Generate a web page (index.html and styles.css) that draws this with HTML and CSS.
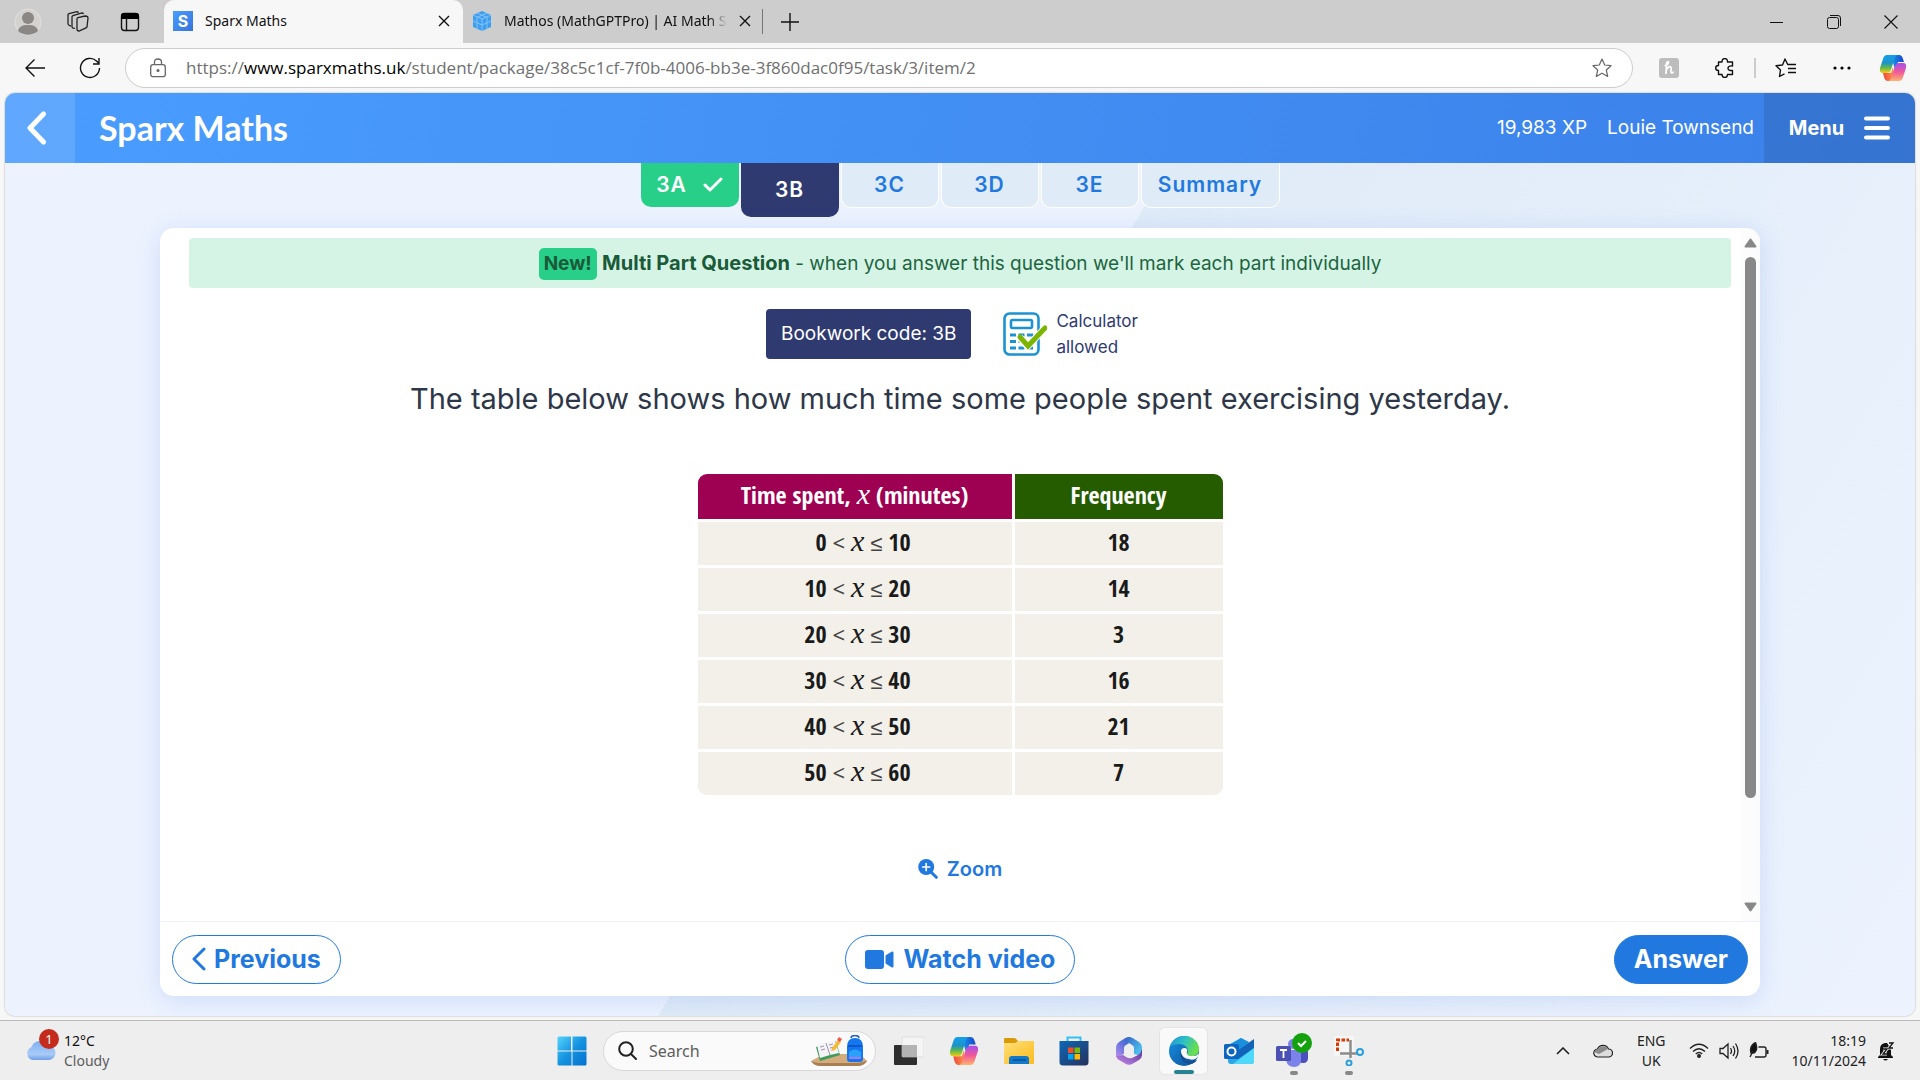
FILE: index.html
```html
<!DOCTYPE html>
<html lang="en-GB">
<head>
<meta charset="utf-8">
<title>Sparx Maths</title>
<link rel="stylesheet" href="styles.css">
</head>
<body>
<svg class="defs" aria-hidden="true">
  <defs>
    <linearGradient id="cpA" x1="0" y1="0" x2="0" y2="1"><stop offset="0" stop-color="#12a0ee"/><stop offset=".45" stop-color="#1f93c8"/><stop offset=".7" stop-color="#5fb84e"/><stop offset="1" stop-color="#f5cf10"/></linearGradient>
    <linearGradient id="cpB" x1="0" y1="0" x2="0" y2="1"><stop offset="0" stop-color="#a44df0"/><stop offset=".5" stop-color="#f0589a"/><stop offset="1" stop-color="#ffb36b"/></linearGradient>
    <linearGradient id="cpC" x1="0" y1="0" x2="1" y2="0"><stop offset="0" stop-color="#1697f0"/><stop offset="1" stop-color="#1746c8"/></linearGradient>
    <linearGradient id="cpD" x1="0" y1="0" x2="1" y2="0"><stop offset="0" stop-color="#f0493c"/><stop offset="1" stop-color="#ff9a4c"/></linearGradient>
    <linearGradient id="win" x1="0" y1="0" x2="1" y2="1"><stop offset="0" stop-color="#55d3fb"/><stop offset=".5" stop-color="#1492df"/><stop offset="1" stop-color="#0470cf"/></linearGradient>
    <linearGradient id="folder" x1="0" y1="0" x2="1" y2="1"><stop offset="0" stop-color="#ffdf78"/><stop offset="1" stop-color="#fdbb1c"/></linearGradient>
    <linearGradient id="store" x1="0" y1="0" x2="1" y2="1"><stop offset="0" stop-color="#0c68b8"/><stop offset="1" stop-color="#27305c"/></linearGradient>
    <linearGradient id="edgeT" x1="0" y1="0" x2="1" y2=".4"><stop offset="0" stop-color="#2090d8"/><stop offset=".5" stop-color="#2cc0c6"/><stop offset="1" stop-color="#68df4c"/></linearGradient>
    <linearGradient id="edgeB" x1="0" y1="0" x2="1" y2="1"><stop offset="0" stop-color="#1593e2"/><stop offset="1" stop-color="#0e4d98"/></linearGradient>
    <linearGradient id="m1" x1="0" y1="1" x2="1" y2="0"><stop offset="0" stop-color="#b98df0"/><stop offset=".6" stop-color="#4f6fd8"/><stop offset="1" stop-color="#2c56b4"/></linearGradient>
    <linearGradient id="m2" x1="0" y1="0" x2="1" y2="1"><stop offset="0" stop-color="#3567c4"/><stop offset="1" stop-color="#53d6f8"/></linearGradient>
    <linearGradient id="m3" x1="0" y1="1" x2="1" y2="0"><stop offset="0" stop-color="#c58cf0"/><stop offset="1" stop-color="#5e3390"/></linearGradient>
    <linearGradient id="cloud" x1="0" y1="0" x2="0" y2="1"><stop offset="0" stop-color="#7eb0f2"/><stop offset=".7" stop-color="#a9cbf7"/><stop offset="1" stop-color="#6e9fea"/></linearGradient>
    <symbol id="copilot" viewBox="0 0 28 28">
      <path fill="url(#cpC)" d="M12 1h8q3 0 4 4l1 3h-6l-3 8z"/>
      <path fill="url(#cpD)" d="M16 27H9q-3 0-4-4l-1-4h8l2-6z"/>
      <path fill="url(#cpA)" d="M8 1h10q-2 1-3 5l-3 10q-1 3-4 3H4q-4 0-3-5l3-9q1-4 4-4z"/>
      <path fill="url(#cpB)" d="M20 27H10q2-1 3-5l3-10q1-3 4-3h4q4 0 3 5l-3 9q-1 4-4 4z"/>
    </symbol>
    <symbol id="close" viewBox="0 0 12 12"><path d="M1 1l10 10M11 1L1 11" stroke="currentColor" stroke-width="1.4" fill="none"/></symbol>
  </defs>
</svg>

<div class="tabstrip">
  <button class="strip-btn" aria-label="Profile"><svg width="28" height="28" viewBox="0 0 28 28"><circle cx="14" cy="14" r="13" fill="#d3d2d0" stroke="#e2e1df"/><circle cx="14" cy="10" r="6" fill="#8b8784"/><path d="M4 23c1-5 5-6 10-6s9 1 10 6c-6 5-14 5-20 0z" fill="#8b8784"/></svg></button>
  <button class="strip-btn" aria-label="Workspaces"><svg width="22" height="22" viewBox="0 0 22 22" fill="none" stroke="#222" stroke-width="1.3"><path d="M10 8q0-1 1-1.300l7-1.700q3 0 3 2l-1 9q-1 1-2 1.400l-6 2.600q-2 0-2-2z"/><path d="M8 17q-2 1-3-1V6q0-1 1-1.400l9-2.600q1 0 1.500 1"/><path d="M4 15q-2 0-3-2V4q0-1 1-1.500L10 0.700q1 0 1.500 1"/></svg></button>
  <button class="strip-btn" aria-label="Tab actions"><svg width="20" height="20" viewBox="0 0 20 20"><rect x="1.500" y="1.500" width="17" height="17" rx="3" fill="none" stroke="#111" stroke-width="1.400"/><path d="M1 7V4q0-3 3-3h12q3 0 3 3v3z"/><path d="M6.500 6v12" stroke="#111" stroke-width="1.400"/></svg></button>
  <div class="tab tab-active">
    <span class="favicon">S</span>
    <span class="tab-title">Sparx Maths</span>
    <button class="tab-close" aria-label="Close tab"><svg width="12" height="12"><use href="#close"/></svg></button>
  </div>
  <div class="tab">
    <svg width="20" height="20" viewBox="0 0 20 20"><path d="M10 0l9 4v12l-9 4-9-4V4z" fill="#3d9ff0"/><path d="M1 4l9 4 9-4M10 8v12M5 2l9 4M15 2L6 6M1 10l9 4 9-4M5 6v12M15 6v12" stroke="#8cc4f4" stroke-width=".9" fill="none"/></svg>
    <span class="tab-title tab-fade">Mathos (MathGPTPro) | AI Math S</span>
    <button class="tab-close" aria-label="Close tab"><svg width="12" height="12"><use href="#close"/></svg></button>
  </div>
  <span class="tab-sep"></span>
  <button class="new-tab" aria-label="New tab"><svg width="18" height="18" viewBox="0 0 18 18"><path d="M9 0v18M0 9h18" stroke="#111" stroke-width="1.400"/></svg></button>
  <div class="window-controls">
    <button aria-label="Minimise"><svg width="14" height="14" viewBox="0 0 14 14"><path d="M0 7.500h13" stroke="#111"/></svg></button>
    <button aria-label="Restore"><svg width="14" height="14" viewBox="0 0 14 14" fill="none" stroke="#111"><rect x=".5" y="2.500" width="11" height="11" rx="2"/><path d="M3 .5h8q2.500 0 2.500 2.500v8"/></svg></button>
    <button aria-label="Close"><svg width="14" height="14" viewBox="0 0 14 14"><path d="M.5.500l13 13M13.500.5l-13 13" stroke="#111" stroke-width="1.100"/></svg></button>
  </div>
</div>

<div class="toolbar">
  <button class="nav-btn" aria-label="Back"><svg width="20" height="18" viewBox="0 0 20 18" fill="none" stroke="#111" stroke-width="1.400"><path d="M20 9H1M9.500.5L1 9l8.500 8.500"/></svg></button>
  <button class="nav-btn" aria-label="Refresh"><svg width="22" height="22" viewBox="0 0 22 22" fill="none" stroke="#111" stroke-width="1.400"><path d="M20.500 11a9.500 9.500 0 1 1-3-7L20 6.500M20 1v6h-6"/></svg></button>
  <div class="omnibox">
    <svg width="16" height="20" viewBox="0 0 16 20" fill="none" stroke="#666" stroke-width="1.300"><rect x=".7" y="6.700" width="14.600" height="12" rx="2.500"/><path d="M4.500 6.500V4q0-3 3.500-3t3.500 3v2.500"/><circle cx="8" cy="12.500" r=".9" fill="#555"/></svg>
    <div class="url">https://<b>www.sparxmaths.uk</b>/student/package/38c5c1cf-7f0b-4006-bb3e-3f860dac0f95/task/3/item/2</div>
    <svg width="20" height="20" viewBox="0 0 20 20" fill="none" stroke="#666" stroke-width="1.200" stroke-linejoin="round"><path d="M10 1l2.700 6 6.300.7-4.700 4.300 1.400 6.500L10 15.200 4.300 18.500 5.700 12 1 7.700 7.300 7z"/></svg>
  </div>
  <div class="tools">
    <svg width="20" height="20" viewBox="0 0 20 20"><rect width="20" height="20" rx="3" fill="#bdbdbd"/><path d="M5.500 7.500q4-.5 4-3.500-1.500-1-2 2L7 16M7.300 12q2-4 4-3.300 1.500.8.700 3.300-.5 3 .8 3t1.700-1.500" stroke="#fff" stroke-width="1.700" fill="none"/></svg>
    <svg width="20" height="20" viewBox="0 0 20 20" fill="none" stroke="#111" stroke-width="1.400" stroke-linejoin="round"><path d="M3.500 4H7q0-3.500 2.800-3.500T12.500 4h5v4q-4.500-.5-4.500 2.200t4.500 2.300v4h-5q0 3-2.700 3T7 16.500H3.500v-4Q.700 12.500.7 10t2.800-2.500z"/></svg>
    <span class="tool-sep"></span>
    <svg width="22" height="20" viewBox="0 0 22 20" fill="none" stroke="#111" stroke-width="1.400" stroke-linejoin="round"><path d="M13 7l-3-6-2.500 6L1 7.700 5.500 12l-1 6.500 5-2.700M13 6.500h8M13 10.500h8M13 14.500h8"/></svg>
    <svg width="18" height="4" viewBox="0 0 18 4"><circle cx="2" cy="2" r="1.600"/><circle cx="9" cy="2" r="1.600"/><circle cx="16" cy="2" r="1.600"/></svg>
    <svg class="copilot-tool" width="28" height="28"><use href="#copilot"/></svg>
  </div>
</div>

<div class="viewport">
  <header class="site-header">
    <button class="back" aria-label="Back to tasks"><svg width="20" height="34" viewBox="0 0 20 34" fill="none" stroke="#fff" stroke-width="5" stroke-linecap="round" stroke-linejoin="round"><path d="M16.500 3L3 17l13.500 14"/></svg></button>
    <a class="logo" href="#">Sparx Maths</a>
    <span class="xp">19,983 XP</span>
    <span class="user">Louie Townsend</span>
    <button class="menu">Menu <svg width="26" height="24" viewBox="0 0 26 24" stroke="#fff" stroke-width="4" stroke-linecap="round"><path d="M2 2.500h22M2 12h22M2 21.500h22"/></svg></button>
  </header>

  <main class="page">
    <nav class="task-tabs">
      <a class="task-tab done" href="#">3A <svg width="20" height="15" viewBox="0 0 20 15" fill="none" stroke="#fff" stroke-width="3" stroke-linecap="round" stroke-linejoin="round"><path d="M2 8l5 5L18 2"/></svg></a>
      <a class="task-tab current" href="#">3B</a>
      <a class="task-tab" href="#">3C</a>
      <a class="task-tab" href="#">3D</a>
      <a class="task-tab" href="#">3E</a>
      <a class="task-tab summary" href="#">Summary</a>
    </nav>

    <section class="card">
      <div class="card-body">
        <div class="question">
          <p class="banner"><span class="new">New!</span> <b>Multi Part Question</b> - when you answer this question we'll mark each part individually</p>
          <div class="info">
            <span class="bookwork">Bookwork code: 3B</span>
            <div class="calc">
              <svg width="44" height="44" viewBox="0 0 44 44" fill="none"><rect x="1.500" y="1.500" width="34" height="41" rx="5" stroke="#1b93d3" stroke-width="2.600"/><rect x="8" y="8" width="21" height="8" rx="1.500" stroke="#1b93d3" stroke-width="2.600"/><path d="M7 23h6M15.500 23h6M24 23h6M7 29.500h6M15.500 29.500h4M7 36h6M15.500 36h6M24 36h6" stroke="#1b93d3" stroke-width="2.800"/><path d="M16.500 25l8 9.500L42 16" stroke="#fff" stroke-width="7"/><path d="M17 25l8 9L42 16" stroke="#7cb500" stroke-width="5" stroke-linecap="round"/></svg>
              <span>Calculator<br>allowed</span>
            </div>
          </div>
          <p class="prompt">The table below shows how much time some people spent exercising yesterday.</p>
          <table class="data">
            <thead><tr><th class="time">Time spent, <i>x</i> (minutes)</th><th class="freq">Frequency</th></tr></thead>
            <tbody>
              <tr><td><span class="range">0 <s>&lt;</s> <i>x</i> <s>≤</s> 10</span></td><td>18</td></tr>
              <tr><td><span class="range">10 <s>&lt;</s> <i>x</i> <s>≤</s> 20</span></td><td>14</td></tr>
              <tr><td><span class="range">20 <s>&lt;</s> <i>x</i> <s>≤</s> 30</span></td><td>3</td></tr>
              <tr><td><span class="range">30 <s>&lt;</s> <i>x</i> <s>≤</s> 40</span></td><td>16</td></tr>
              <tr><td><span class="range">40 <s>&lt;</s> <i>x</i> <s>≤</s> 50</span></td><td>21</td></tr>
              <tr><td><span class="range">50 <s>&lt;</s> <i>x</i> <s>≤</s> 60</span></td><td>7</td></tr>
            </tbody>
          </table>
          <button class="zoom"><svg width="20" height="20" viewBox="0 0 20 20" fill="none" stroke-linecap="round"><circle cx="8.200" cy="8" r="8" fill="#2179e0"/><path d="M13 13l5.300 5.300" stroke="#2179e0" stroke-width="3"/><path d="M8.200 4.500v7M4.700 8h7" stroke="#fff" stroke-width="1.700"/></svg>Zoom</button>
        </div>
        <div class="scrollbar">
          <svg width="13" height="10" viewBox="0 0 13 10"><path d="M6.500 1.500L11.500 8.500h-10z" fill="#888" stroke="#888" stroke-width="2" stroke-linejoin="round"/></svg>
          <span class="thumb"></span>
          <svg width="13" height="10" viewBox="0 0 13 10"><path d="M6.500 8.500L11.500 1.500h-10z" fill="#888" stroke="#888" stroke-width="2" stroke-linejoin="round"/></svg>
        </div>
      </div>
      <footer class="card-footer">
        <button class="pill"><svg width="14" height="24" viewBox="0 0 14 24" fill="none" stroke="#2179e0" stroke-width="3" stroke-linecap="round" stroke-linejoin="round"><path d="M12 2L2 12l10 10"/></svg>Previous</button>
        <button class="pill watch"><svg width="29" height="19" viewBox="0 0 29 19" fill="#2179e0"><rect width="19" height="19" rx="3"/><path d="M20.500 5.500l6-3.700q2-.8 2 1v13.400q0 1.800-2 1l-6-3.700z"/></svg>Watch video</button>
        <button class="pill answer">Answer</button>
      </footer>
    </section>
  </main>
</div>

<div class="taskbar">
  <div class="weather">
    <svg width="35" height="34" viewBox="0 0 35 34"><path d="M7 31a7 7 0 0 1-.5-13A9 9 0 0 1 23 17a7 7 0 0 1 1 14z" fill="url(#cloud)"/><circle cx="24" cy="10" r="10" fill="#c42b1c"/><text x="24" y="15" class="badge-num">1</text></svg>
    <div><div class="temp">12°C</div><div class="cond">Cloudy</div></div>
  </div>
  <div class="apps">
    <button class="app" aria-label="Start"><svg width="30" height="30" viewBox="0 0 30 30"><path fill="url(#win)" d="M2 .5h12V14.500H.5V2q0-1.500 1.500-1.500zM15.500.5H28q1.500 0 1.500 1.500v12.500h-14zM.5 15.500H14.500v14H2q-1.500 0-1.500-1.500zM15.500 15.500h14V28q0 1.500-1.500 1.500H15.500z"/></svg></button>
    <label class="search">
      <svg width="19" height="19" viewBox="0 0 19 19" fill="none" stroke="#222" stroke-width="2" stroke-linecap="round"><circle cx="8" cy="8" r="6.800"/><path d="M13 13l5 5"/></svg>
      <input type="text" placeholder="Search" aria-label="Search">
      <svg width="58" height="32" viewBox="0 0 58 32"><path d="M1 26l13-7h36l7 7q-3 5-10 5H11q-7 0-10-5z" fill="#d3ab7d"/><path d="M1 26q3 5 10 5h36q7 0 10-5l-1 0q-4 2-10 2H12q-7 0-11-2z" fill="#a87e55"/><path d="M6 12l20-6 4 14-20 6z" fill="#3f9b5c"/><path d="M7 10l9-2 9-3 4 13-9 2-10 3z" fill="#f5f2f8"/><path d="M16 8l4 12M10 12l4-1M11 15l4-1M19 10l4-1M20 13l4-1" stroke="#9c98ac" fill="none"/><path d="M22 13l6-8 3 2-6 8-4 1z" fill="#f8b932"/><path d="M27 5l2-3 3 2-2 3z" fill="#ee5a4a"/><path d="M37 12q0-9 8-9t8 9v12q0 3-3 3H40q-3 0-3-3z" fill="#1477f0"/><path d="M41 3q0-2.500 4-2.500T49 3" stroke="#1c56c8" stroke-width="1.500" fill="none"/><path d="M39 17q6-5 12 0v6H39z" fill="#2aa2fc"/><path d="M39 23h12" stroke="#a879f0" stroke-width="2"/><path d="M38 11h14" stroke="#0b4cbd" stroke-width="1.500"/></svg>
    </label>
    <button class="app" aria-label="Task view"><svg width="30" height="30" viewBox="0 0 30 30"><rect y="9" width="23" height="20" rx="1" fill="#2e2e2e"/><rect x="8" y="1" width="22" height="20" rx="1" fill="#f4f4f4" stroke="#d4d4d4" stroke-width=".6"/><rect x="8" y="9" width="15" height="12" fill="#b3b3b3"/></svg></button>
    <button class="app" aria-label="Copilot"><svg width="30" height="30"><use href="#copilot"/></svg></button>
    <button class="app" aria-label="File Explorer"><svg width="30" height="28" viewBox="0 0 30 28"><path d="M0 2q0-1 1-1h9q2 0 3 2l1 1h15q1 0 1 1v5H0z" fill="#d99a09"/><path d="M0 6h11l3-2h16v22q0 1-1 1H1q-1 0-1-1z" fill="url(#folder)"/><path d="M5 27v-5q0-3 3-3h14q3 0 3 3v5z" fill="#1178ca"/><path d="M9 23h13" stroke="#0a4f93" stroke-width="1.500"/></svg></button>
    <button class="app" aria-label="Microsoft Store"><svg width="30" height="30" viewBox="0 0 30 30"><path d="M8.500 6V1.500h13V6" fill="none" stroke="#35c0f5" stroke-width="2"/><path d="M.5 5h29v21q0 3.500-3.500 3.500H4Q.5 29.500.5 26z" fill="url(#store)"/><path fill="#f25022" d="M9 11.500h5.500V17H9z"/><path fill="#7fba00" d="M15.500 11.500H21V17h-5.500z"/><path fill="#00a4ef" d="M9 18h5.500v5.500H9z"/><path fill="#ffb900" d="M15.500 18H21v5.500h-5.500z"/></svg></button>
    <button class="app" aria-label="Microsoft 365"><svg width="28" height="30" viewBox="0 0 28 30"><path d="M14 1Q12 1 10 2.200L4 6Q1 8 1 11v10l8-3v-6q0-2 2-3l8-5z" fill="url(#m1)"/><path d="M14 1q2 0 4 1.200L24 6q3 2 3 5v9l-8-2v-6q0-2-2-3l-6-4z" fill="url(#m2)"/><path d="M1 20q1 3 3 4l6 3.600q4 2.400 8 0L24 24q3-2 3-5v-6q-1 4-4 6l-6 3q-3 1-6-1l-3-2z" fill="url(#m3)"/><path d="M14 10.500l4.500 2.500v4.500L14 20l-4.500-2.500V13z" fill="#eee"/></svg></button>
    <button class="app app-open" aria-label="Microsoft Edge"><svg width="30" height="30" viewBox="0 0 30 30"><circle cx="15" cy="15" r="15" fill="url(#edgeB)"/><path d="M1 11C3 4 9 0 15 0c9 0 15 6 15 13 0 5-3 7-7 7-3 0-5-1-5-2l1-3c0-4-4-7-9-7-4 0-7 1-9 3z" fill="url(#edgeT)"/><path d="M12 14c-3 8 3 14 9 14 3 0 6-2 7-4-8 3-13 0-13-5 0-2 1-3 1-4z" fill="#154f95"/><path d="M12 15c0-3 4-4 6-2 1 2-1 3 0 5s4 2 6 2c3 0 4-1 5-2l1 0q-1 4-4 5c-2 1-4 1-6 0-5 0-8-4-8-8z" fill="#f7f7f7"/></svg><span class="mark mark-active"></span></button>
    <button class="app" aria-label="Outlook"><svg width="30" height="28" viewBox="0 0 30 28"><path d="M4 8L17 1l13 8v15q0 3-3 3H7q-3 0-3-3z" fill="#2ba7e8"/><path d="M10 16l20-14v9L14 22z" fill="#1363b8"/><path d="M4 9l13-8 8 4-15 11z" fill="#1a90dd"/><path d="M30 11v13q0 3-3 3H9z" fill="#4fd8fa"/><rect y="7" width="15" height="15" rx="1.500" fill="#0c66bf"/><circle cx="7.500" cy="14.500" r="4" fill="none" stroke="#fff" stroke-width="2"/></svg></button>
    <button class="app" aria-label="Teams"><svg width="36" height="36" viewBox="0 0 36 36"><circle cx="27" cy="14" r="4" fill="#4a53b8"/><path d="M21 17h9q2 0 2 2v6q0 5-5 5t-6-4z" fill="#4b4fc0"/><circle cx="17" cy="11" r="5" fill="#7b83eb"/><path d="M10 17h13q2 0 2 2v8q0 7-7 7t-8-7z" fill="#7b83eb"/><rect y="13" width="15" height="15" rx="1.500" fill="#4b50b5"/><path d="M4 17h7M7.500 17v8" stroke="#fff" stroke-width="1.800"/><circle cx="26" cy="10" r="10" fill="#13a10e"/><path d="M22 10l3 3 5-5" fill="none" stroke="#fff" stroke-width="2"/></svg><span class="mark"></span></button>
    <button class="app" aria-label="Snipping Tool"><svg width="30" height="30" viewBox="0 0 30 30"><rect width="20" height="20" fill="#f6f6f6"/><path d="M3.500 15V4H15" fill="none" stroke="#d83b01" stroke-width="3" stroke-dasharray="3.500 1.500"/><path d="M16.500 4v18M6 17.500h17" stroke="#8c8c8c" stroke-width="2.500"/><circle cx="26" cy="16" r="3" fill="none" stroke="#2a9fdc" stroke-width="2"/><circle cx="15" cy="27" r="2.500" fill="none" stroke="#2a9fdc" stroke-width="2"/></svg><span class="mark"></span></button>
  </div>
  <div class="tray">
    <button aria-label="Show hidden icons"><svg width="14" height="8" viewBox="0 0 14 8" fill="none" stroke="#222" stroke-width="1.600"><path d="M1 7l6-6 6 6"/></svg></button>
    <svg class="onedrive" width="20" height="15" viewBox="0 0 20 15"><path d="M5 14a4 4 0 0 1-.5-8A6 6 0 0 1 15.500 6a4 4 0 0 1 0 8z" fill="#ddd" stroke="#222" stroke-width="1.200"/><path d="M1.500 9A4 4 0 0 1 5 6a6 6 0 0 1 10 0L6 11z" fill="#8a8a8a"/></svg>
    <div class="lang">ENG<br>UK</div>
    <div class="status">
      <svg width="20" height="15" viewBox="0 0 20 15" fill="none" stroke="#222" stroke-width="1.400"><path d="M1 5.500q9-8.500 18 0M4 8.500q6-5.500 12 0M6.800 11q3.200-3 6.400 0"/><circle cx="10" cy="13" r="1.300" fill="#222"/></svg>
      <svg width="20" height="18" viewBox="0 0 20 18" fill="none" stroke="#222" stroke-width="1.300"><path d="M1 6.500h3L9 2v14l-5-4.500H1zM11.500 6q2 3 0 6M14 4q3.500 5 0 10M16.500 1.500q5 7.500 0 15"/></svg>
      <svg width="20" height="18" viewBox="0 0 20 18" fill="none" stroke="#222" stroke-width="1.400"><path d="M9.500 5H15q2 0 2 2v6q0 2-2 2H6"/><path d="M18.500 8v4" stroke-width="2"/><path d="M2 11Q0 4 6.500.5 9.500 8 5 11z" fill="#111"/><path d="M4 9l-3 6"/></svg>
    </div>
    <div class="clock">18:19<br>10/11/2024</div>
    <svg width="18" height="20" viewBox="0 0 18 20"><path d="M3 14V8q0-5 5-6h2l4 6v6l2 2v1H1v-1z" fill="#111"/><path d="M6 18h5q-2.500 3-5 0z" fill="#111"/><path d="M6 8h4l-4 5h4M12 2h4l-4 5h4" stroke="#eee" stroke-width="3" fill="none"/><path d="M6 8h4l-4 5h4M12 2h4l-4 5h4" stroke="#111" stroke-width="1.300" fill="none"/></svg>
  </div>
</div>
</body>
</html>
```
FILE: styles.css
```css
* { box-sizing: border-box; }

body {
  margin: 0;
  min-height: 100vh;
  display: flex;
  flex-direction: column;
  background: #f7f7f7;
  font-family: "Noto Sans", "Open Sans", sans-serif;
  color: #111;
}

button {
  border: 0;
  padding: 0;
  background: none;
  font: inherit;
  color: inherit;
  display: flex;
  align-items: center;
  justify-content: center;
}

a { text-decoration: none; color: inherit; }
svg { display: block; flex: none; }
.defs { position: absolute; width: 0; height: 0; }

/* Browser tab strip */
.tabstrip {
  display: flex;
  align-items: stretch;
  height: 43px;
  background: #cdcdcd;
}
.strip-btn { width: 52px; }
.strip-btn:first-child { padding-left: 4px; }
.tab {
  display: flex;
  align-items: center;
  width: 299px;
  padding: 0 13px 1px 9px;
  gap: 12px;
  font-size: 14px;
  line-height: 20px;
}
.tab-active { background: #f7f7f7; border-radius: 10px 10px 0 0; margin-left: 8px; }
.tab-title { flex: 1; white-space: nowrap; }
.tab-fade {
  -webkit-mask-image: linear-gradient(90deg, #000 92%, transparent);
  mask-image: linear-gradient(90deg, #000 92%, transparent);
}
.favicon {
  width: 20px;
  height: 20px;
  background: linear-gradient(135deg, #4a9dff, #3573dc);
  color: #fff;
  font: 700 16px/20px Inter, sans-serif;
  text-align: center;
}
.tab-close { width: 12px; }
.tab-sep { width: 1px; height: 25px; background: #777; align-self: center; }
.new-tab { width: 54px; }
.window-controls { display: flex; margin-left: auto; padding-right: 1px; }
.window-controls button { width: 57px; }

/* Address bar */
.toolbar {
  display: flex;
  align-items: center;
  height: 50px;
  padding: 0 13px 0 7px;
}
.nav-btn { width: 55px; height: 40px; }
.omnibox {
  flex: 1;
  display: flex;
  align-items: center;
  gap: 20px;
  height: 40px;
  margin-left: 8px;
  padding: 0 20px 0 24px;
  background: #fff;
  border: 1px solid #ccc;
  border-radius: 20px;
}
.url {
  flex: 1;
  font-family: "Open Sans", "Noto Sans", sans-serif;
  font-size: 17px;
  line-height: 24px;
  color: #707070;
  white-space: nowrap;
}
.url b { font-weight: 400; color: #000; }
.tools { display: flex; align-items: center; gap: 36px; margin-left: 26px; }
.tool-sep { width: 2px; height: 20px; margin: 0 -17px; background: #ccc; }
.copilot-tool { margin-left: -8px; }

/* Web page frame */
.viewport {
  flex: 1;
  display: flex;
  flex-direction: column;
  margin: 0 5px 4px;
  border-radius: 10px;
  overflow: hidden;
  box-shadow: 0 0 2px rgba(0, 0, 0, .35);
  background: linear-gradient(121deg, #ecf3fe 49%, #dfebf7 49%, #ecf3fe 100%);
  font-family: Inter, "Open Sans", sans-serif;
}
.site-header {
  display: flex;
  align-items: stretch;
  height: 70px;
  background: linear-gradient(100deg, #4a9dff, #3a80e8);
  color: #fff;
  line-height: 70px;
}
.back { width: 70px; padding-right: 6px; background: rgba(255, 255, 255, .12); }
.logo {
  margin-left: 24px;
  margin-right: auto;
  font-family: Lato, sans-serif;
  font-size: 34px;
  font-weight: 700;
}
.xp, .user { font-size: 19px; margin-right: 20px; }
.user { margin-right: 10px; }
.menu {
  width: 151px;
  gap: 20px;
  font-size: 20px;
  font-weight: 700;
  background: rgba(40, 80, 140, .25);
}

.page {
  flex: 1;
  display: flex;
  flex-direction: column;
  padding: 0 155px 20px;
}
.task-tabs { display: flex; justify-content: center; gap: 2px; height: 65px; }
.task-tab {
  display: flex;
  align-items: center;
  justify-content: center;
  gap: 16px;
  width: 98px;
  height: 45px;
  padding-bottom: 2px;
  border: 1px solid #fff;
  border-top: 0;
  border-radius: 0 0 10px 10px;
  background: #dfebf7;
  color: #2179e0;
  font-size: 21px;
  font-weight: 600;
  letter-spacing: 1px;
}
.task-tab.done { border: 0; height: 44px; background: #28cf88; color: #fff; }
.task-tab.current { border: 0; height: 54px; background: #2e3a70; color: #fff; }
.task-tab.summary { width: 139px; }

.card {
  flex: 1;
  display: flex;
  flex-direction: column;
  background: #fff;
  border-radius: 14px;
  box-shadow: 0 4px 24px rgba(90, 130, 235, .2);
}
.card-body { flex: 1; display: flex; }
.question {
  flex: 1;
  display: flex;
  flex-direction: column;
  align-items: center;
  padding: 10px 10px 0 29px;
}
.banner {
  align-self: stretch;
  margin: 0;
  height: 50px;
  border-radius: 4px;
  background: #d5f4e6;
  color: #1d6440;
  font-size: 19px;
  line-height: 50px;
  text-align: center;
}
.banner b { font-size: 20px; font-weight: 700; color: #1b5a39; }
.new {
  display: inline-block;
  padding: 0 5px;
  border-radius: 5px;
  background: #28cf88;
  color: #1b5a39;
  font-weight: 700;
  line-height: 32px;
}
.info { display: flex; align-items: center; gap: 32px; margin-top: 20px; }
.bookwork {
  padding: 0 15px;
  border-radius: 4px;
  background: #2e3a70;
  color: #fff;
  font-size: 19px;
  line-height: 50px;
}
.calc {
  display: flex;
  align-items: center;
  gap: 9px;
  padding-right: 16px;
  font-size: 17px;
  line-height: 26px;
  color: #2e3a70;
}
.prompt { margin: 19px 0 0; font-size: 29px; line-height: 40px; color: #2d3748; white-space: nowrap; }

.data {
  width: 531px;
  margin-top: 52px;
  border-spacing: 3px;
  table-layout: fixed;
  font-family: "Open Sans Condensed", "Roboto Condensed", Roboto, sans-serif;
  font-size: 24px;
  font-weight: 700;
  line-height: 30px;
  text-align: center;
  color: #1a1a1a;
}
.data th { height: 45px; padding: 0 0 4px; color: #fff; }
.data td { height: 43px; padding: 0 0 4px; background: #f2f0e9; }
.data .time { width: 314px; background: #9e0052; border-radius: 9px 0 0 0; }
.data .freq { background: #255c00; border-radius: 0 9px 0 0; }
.data tbody tr:last-child td:first-child { border-radius: 0 0 0 9px; }
.data tbody tr:last-child td:last-child { border-radius: 0 0 9px 0; }
.data i { font-family: "Liberation Serif", serif; font-size: 30px; line-height: 30px; font-weight: 400; }
.data s { font-family: "Noto Sans", sans-serif; font-size: 22px; font-weight: 400; text-decoration: none; color: #444; }
.range { display: inline-block; width: 112px; text-align: right; white-space: nowrap; }

.zoom { gap: 9px; margin: 56px 0 30px; font-size: 20px; line-height: 30px; font-weight: 600; color: #2179e0; }

.scrollbar {
  width: 19px;
  padding: 10px 0 9px;
  display: flex;
  flex-direction: column;
  align-items: center;
  background: #fcfcfc;
  border-radius: 0 14px 0 0;
}
.thumb { width: 11px; height: 541px; margin: 9px 0 auto; border-radius: 6px; background: #888; }

.card-footer {
  display: grid;
  grid-template-columns: 1fr auto 1fr;
  align-items: center;
  height: 75px;
  padding: 0 12px;
  border-top: 1px solid #ecf3fe;
}
.pill {
  justify-self: start;
  gap: 8px;
  height: 49px;
  padding: 0 19px;
  border: 1px solid #2179e0;
  border-radius: 25px;
  color: #2179e0;
  font-size: 25px;
  font-weight: 700;
}
.pill.watch { gap: 10px; }
.pill.answer { justify-self: end; background: #2179e0; color: #fff; }

/* Windows taskbar */
.taskbar {
  display: grid;
  grid-template-columns: 1fr auto 1fr;
  height: 60px;
  border-top: 1px solid #b9b9b9;
  background: #eee;
  font-size: 14px;
  line-height: 20px;
}
.weather { display: flex; align-items: center; gap: 4px; padding: 0 0 0 25px; }
.weather svg { margin-bottom: 9px; }
.badge-num { fill: #fff; font-size: 13px; text-anchor: middle; }
.cond { color: #5c5c5c; }
.apps { display: flex; align-items: center; }
.app { position: relative; width: 55px; height: 48px; }
.app-open { width: 49px; margin: 0 3px; background: #f9f9f9; border: 1px solid #e4e4e4; border-radius: 6px; }
.mark {
  position: absolute;
  bottom: 0;
  left: 50%;
  width: 8px;
  height: 4px;
  margin-left: -4px;
  border-radius: 2px;
  background: #888;
}
.mark-active { width: 20px; margin-left: -10px; background: #278394; }
.search {
  display: flex;
  align-items: center;
  gap: 12px;
  width: 273px;
  height: 40px;
  margin: 0 5px 0 4px;
  padding: 0 7px 0 14px;
  border: 1px solid #d8d8d8;
  border-radius: 20px;
  background: #fafafa;
}
.search input {
  flex: 1;
  min-width: 0;
  border: 0;
  padding: 0;
  background: none;
  font-family: inherit;
  font-size: 16px;
}
.search input::placeholder { color: #5c5c5c; }
.tray { display: flex; align-items: center; justify-content: flex-end; padding-right: 25px; color: #222; }
.onedrive { margin-left: 23px; }
.lang { margin-left: 24px; text-align: center; }
.status { display: flex; align-items: center; gap: 10px; margin: 0 23px; }
.clock { text-align: right; margin-right: 11px; }
```
